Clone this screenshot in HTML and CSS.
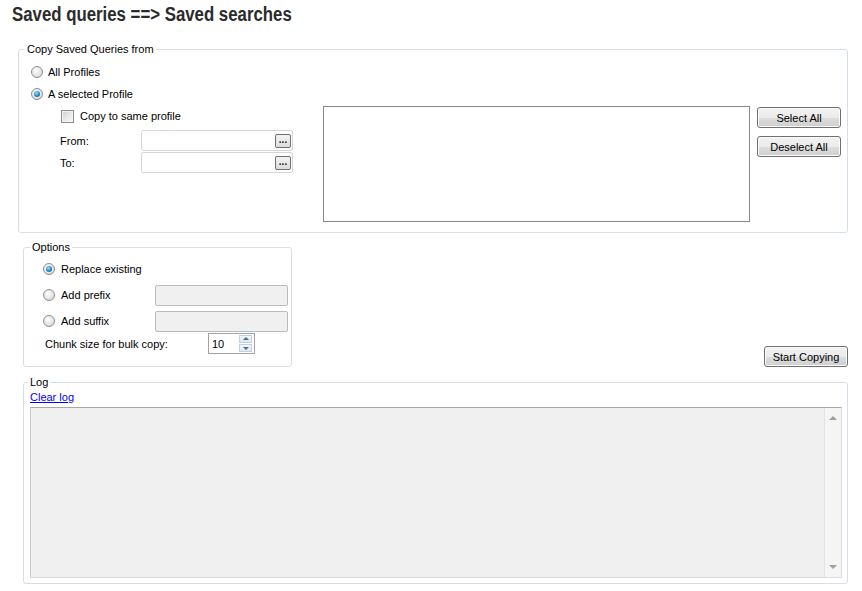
FILE: index.html
```html
<!DOCTYPE html>
<html>
<head>
  <title>Saved queries to Saved searches</title>
  <link rel="stylesheet" href="styles.css">
</head>
<body>
  <h1 class="page-title"><span class="title-text">Saved queries ==&gt; Saved searches</span></h1>

  <fieldset class="group group-source">
    <legend>Copy Saved Queries from</legend>
    <div class="source-body">
      <div class="source-options">
        <label class="radio-row"><span class="radio"></span>All Profiles</label>
        <label class="radio-row"><span class="radio checked"></span>A selected Profile</label>
        <div class="profile-fields">
          <label class="check-row"><span class="checkbox"></span>Copy to same profile</label>
          <div class="field-row field-from">
            <span class="field-label">From:</span>
            <div class="picker"><span class="picker-btn">...</span></div>
          </div>
          <div class="field-row">
            <span class="field-label">To:</span>
            <div class="picker"><span class="picker-btn">...</span></div>
          </div>
        </div>
      </div>
      <div class="profile-list"></div>
      <div class="list-buttons">
        <button class="btn">Select All</button>
        <button class="btn">Deselect All</button>
      </div>
    </div>
  </fieldset>

  <div class="middle-row">
    <fieldset class="group group-options">
      <legend>Options</legend>
      <div class="options-body">
        <label class="opt-row"><span class="radio checked"></span><span class="opt-label">Replace existing</span></label>
        <div class="opt-row">
          <span class="radio"></span><span class="opt-label">Add prefix</span>
          <div class="text-disabled"></div>
        </div>
        <div class="opt-row">
          <span class="radio"></span><span class="opt-label">Add suffix</span>
          <div class="text-disabled"></div>
        </div>
        <div class="chunk-row">
          <span class="chunk-label">Chunk size for bulk copy:</span>
          <div class="spin">
            <span class="spin-value">10</span>
            <div class="spin-btns">
              <span class="spin-up"></span>
              <span class="spin-down"></span>
            </div>
          </div>
        </div>
      </div>
    </fieldset>
    <button class="btn">Start Copying</button>
  </div>

  <fieldset class="group group-log">
    <legend>Log</legend>
    <div class="log-body">
      <a href="#" class="clear-log">Clear log</a>
      <div class="log-box">
        <div class="log-scroll">
          <span class="arrow-up"></span>
          <span class="arrow-down"></span>
        </div>
      </div>
    </div>
  </fieldset>
</body>
</html>
```

FILE: styles.css
```css
* {
  box-sizing: border-box;
}

body {
  margin: 0;
  font-family: "Liberation Sans", Arial, sans-serif;
  font-size: 11px;
  color: #000;
  background: #fff;
}

.page-title {
  margin: 0;
  height: 43px;
  padding: 3px 0 0 12px;
  font-family: "Liberation Sans Narrow", "Liberation Sans", sans-serif;
  font-size: 20px;
  line-height: 22px;
  font-weight: bold;
  color: #2b2b2b;
}

/* no narrow face installed, squeeze the regular bold one */
.title-text {
  display: inline-block;
  transform: scaleX(0.84);
  transform-origin: left center;
}

/* group boxes */
.group {
  margin: 0;
  padding: 0;
  min-width: 0;
  border: 1px solid #d5dfe5;
  border-radius: 3px;
}

.group legend {
  margin-left: 6px;
  padding: 0 2px;
  line-height: 13px;
}

.group-source {
  margin: 0 14px 0 18px;
}

.source-body {
  display: flex;
  align-items: flex-start;
  padding-bottom: 10px;
}

.source-options {
  width: 274px;
  padding: 5px 0 0 12px;
}

.radio-row {
  display: flex;
  align-items: center;
  gap: 5px;
  height: 22px;
}

.radio {
  flex: none;
  position: relative;
  width: 12px;
  height: 12px;
  border: 1px solid #8c8e8f;
  border-radius: 50%;
  background: radial-gradient(circle at 40% 35%, #fdfdfd 0%, #e6e6e6 55%, #cfcfcf 100%);
}

.radio.checked::after {
  content: "";
  position: absolute;
  left: 2px;
  top: 2px;
  width: 6px;
  height: 6px;
  border-radius: 50%;
  background: radial-gradient(circle at 40% 35%, #9fe3ff 0%, #2a8ccf 50%, #124c7a 100%);
}

.checkbox {
  flex: none;
  width: 13px;
  height: 13px;
  border: 1px solid #8c8e8f;
  background: linear-gradient(135deg, #cfcfcf 0%, #ececec 60%, #f8f8f8 100%);
  box-shadow: inset 0 0 0 1px #f4f4f4;
}

.profile-fields {
  margin-left: 29px;
}

.check-row {
  display: flex;
  align-items: center;
  gap: 6px;
  height: 22px;
  margin-left: 1px;
}

.field-row {
  display: flex;
  align-items: center;
  height: 21px;
  margin-top: 1px;
}

.field-from {
  margin-top: 3px;
}

.field-label {
  width: 81px;
}

.picker {
  width: 152px;
  height: 21px;
  border: 1px solid #d3d6da;
  border-radius: 2px;
  display: flex;
  justify-content: flex-end;
  align-items: center;
  padding-right: 1px;
}

.picker-btn {
  width: 16px;
  height: 14px;
  border: 1px solid #6f6f6f;
  border-radius: 2px;
  background: linear-gradient(#f4f4f4, #dcdcdc);
  font-size: 10px;
  font-weight: bold;
  line-height: 10px;
  text-align: center;
  color: #222;
}

.profile-list {
  flex: none;
  width: 427px;
  height: 116px;
  margin: 50px 0 0 30px;
  border: 1px solid #828790;
  background: #fff;
}

.list-buttons {
  display: flex;
  flex-direction: column;
  gap: 8px;
  margin: 51px 0 0 7px;
}

.btn {
  width: 84px;
  height: 21px;
  padding: 0;
  border: 1px solid #707070;
  border-radius: 3px;
  background: linear-gradient(#f2f2f2 0%, #ebebeb 50%, #dddddd 51%, #cfcfcf 100%);
  box-shadow: inset 0 0 0 1px #fbfbfb;
  font-family: inherit;
  font-size: 11px;
  color: #000;
}

/* options */
.middle-row {
  display: flex;
  justify-content: space-between;
  align-items: flex-end;
  margin: 8px 14px 0 23px;
}

.group-options {
  width: 269px;
}

.options-body {
  padding: 2px 0 12px 19px;
}

.opt-row {
  display: flex;
  align-items: center;
  gap: 6px;
  height: 26px;
}

.opt-label {
  width: 88px;
}

.text-disabled {
  width: 133px;
  height: 21px;
  border: 1px solid #b9bcbf;
  border-radius: 2px;
  background: #f0f0f0;
}

.chunk-row {
  display: flex;
  align-items: center;
  height: 21px;
  margin: -1px 0 0 2px;
}

.chunk-label {
  width: 163px;
}

.spin {
  display: flex;
  align-items: center;
  width: 47px;
  height: 21px;
  padding: 0 2px 0 3px;
  border: 1px solid #a3a3a3;
}

.spin-btns {
  margin-left: auto;
  display: flex;
  flex-direction: column;
  gap: 1px;
}

.spin-up,
.spin-down {
  position: relative;
  width: 13px;
  height: 8px;
  border: 1px solid #c3cfdc;
  background: linear-gradient(#f5f8fb, #dfe8f1);
}

.spin-up::after,
.spin-down::after {
  content: "";
  position: absolute;
  left: 3px;
  border-left: 3px solid transparent;
  border-right: 3px solid transparent;
}

.spin-up::after {
  top: 1px;
  border-bottom: 3px solid #4d6b8a;
}

.spin-down::after {
  top: 2px;
  border-top: 3px solid #4d6b8a;
}

/* log */
.group-log {
  margin: 9px 14px 0 23px;
}

.group-log legend {
  margin-left: 4px;
}

.log-body {
  padding: 2px 5px 5px 6px;
}

.clear-log {
  display: block;
  line-height: 13px;
  color: #0000ff;
  text-decoration: underline;
}

.log-box {
  display: flex;
  justify-content: flex-end;
  height: 171px;
  margin-top: 3px;
  border: 1px solid;
  border-color: #a8a8a8 #dcdcdc #dcdcdc #c9c9c9;
  background: #f0f0f0;
}

.log-scroll {
  position: relative;
  width: 17px;
  border-left: 1px solid #e2e2e2;
  background: #f5f5f5;
}

.arrow-up,
.arrow-down {
  position: absolute;
  left: 4px;
  border-left: 4px solid transparent;
  border-right: 4px solid transparent;
}

.arrow-up {
  top: 8px;
  border-bottom: 4px solid #a0a0a0;
}

.arrow-down {
  bottom: 8px;
  border-top: 4px solid #a0a0a0;
}
```
